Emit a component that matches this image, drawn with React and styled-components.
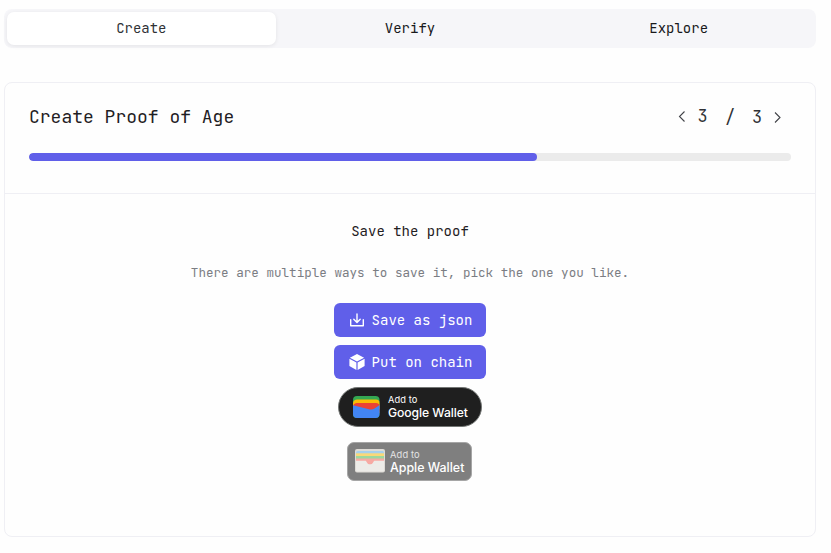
import React from "react";
import styled, { createGlobalStyle } from "styled-components";

const GlobalStyle = createGlobalStyle`
  *, *::before, *::after { box-sizing: border-box; }
  body {
    margin: 0;
    background: #fefefe;
    color: #1f2023;
    font-family: "JetBrains Mono", "DejaVu Sans Mono", monospace;
    overflow: hidden;
  }
  button { font: inherit; color: inherit; border: 0; background: none; padding: 0; cursor: pointer; }
  svg { display: block; flex: none; }
`;

const Page = styled.main`
  width: 812px;
  height: 537px;
  margin-left: 4px;
  padding-top: 9px;
  display: flex;
  flex-direction: column;
  gap: 34px;
`;

const Tabs = styled.nav`
  display: grid;
  grid-template-columns: repeat(3, 1fr);
  height: 39px;
  padding: 3px;
  flex: none;
  border-radius: 8px;
  background: #f6f6f9;
`;

const Tab = styled.button`
  border-radius: 7px;
  font-size: 14px;
  line-height: 33px;
  background: ${({ $active }) => ($active ? "#fff" : "transparent")};
  color: ${({ $active }) => ($active ? "#303236" : "#18191b")};
  box-shadow: ${({ $active }) => ($active ? "0 1px 4px rgba(0, 0, 0, 0.08)" : "none")};
`;

const Card = styled.section`
  height: 455px;
  display: flex;
  flex-direction: column;
  border: 1px solid #efeff4;
  border-radius: 8px;
  background: #fefefe;
`;

const CardHeader = styled.header`
  height: 111px;
  flex: none;
  padding: 20px 24px 0;
  border-bottom: 1px solid #efeff4;
`;

const TitleRow = styled.div`
  display: flex;
  align-items: center;
  justify-content: space-between;
  height: 28px;
`;

const Title = styled.h1`
  margin: 0;
  font-size: 18px;
  font-weight: 400;
  line-height: 28px;
`;

const Pager = styled.div`
  display: grid;
  grid-template-columns: 18px 24px 31px 23px 18px;
  align-items: center;
  justify-items: center;
  margin-right: 4.5px;
  font-size: 17px;
  line-height: 28px;
  color: #303236;
`;

const CurrentStep = styled.span`
  padding-bottom: 2px;
`;

const Track = styled.div`
  height: 8px;
  margin-top: 22px;
  overflow: hidden;
  border-radius: 4px;
  background: #ebebeb;
`;

const Bar = styled.div`
  height: 100%;
  border-radius: 4px;
  background: #605fe9;
`;

const CardBody = styled.div`
  display: flex;
  flex-direction: column;
  align-items: center;
  padding-top: 27px;
`;

const Heading = styled.h2`
  margin: 0 0 21px;
  font-size: 14px;
  font-weight: 400;
  line-height: 21px;
`;

const Hint = styled.p`
  margin: 0 0 20px;
  font-size: 12.6px;
  line-height: 20px;
  color: #7b7d83;
`;

const Action = styled.button`
  display: flex;
  align-items: center;
  gap: 6.6px;
  width: 152px;
  height: 34px;
  margin-bottom: 8px;
  padding-left: 15px;
  border-radius: 6px;
  background: #605fe9;
  color: #fff;
  font-size: 14px;
  line-height: 34px;
  white-space: nowrap;
`;

const WalletButton = styled.button`
  display: flex;
  align-items: center;
  text-align: left;
  color: #fff;
  white-space: nowrap;
`;

const GoogleWallet = styled(WalletButton)`
  width: 144px;
  height: 40px;
  gap: 8px;
  padding-left: 14px;
  border: 1px solid #747775;
  border-radius: 20px;
  background: #1f1f1f;
`;

const AppleWallet = styled(WalletButton)`
  width: 125px;
  height: 38.5px;
  gap: 5px;
  margin: 15px 1px 0 0;
  padding-left: 7px;
  border: 1px solid #a6a6a6;
  border-radius: 7px;
  background: #7f7f7f;
`;

const WalletText = styled.span`
  display: flex;
  flex-direction: column;
  font-family: Inter, sans-serif;
`;

const Small = styled.span`
  font-size: 9.3px;
  line-height: 12px;
  letter-spacing: ${({ $spacing }) => $spacing};
  color: ${({ $color }) => $color};
`;

const Brand = styled.span`
  font-size: ${({ $size }) => $size};
  font-weight: ${({ $weight }) => $weight};
  line-height: ${({ $line }) => $line};
  letter-spacing: ${({ $spacing }) => $spacing};
`;

const Chevron = ({ next }) => (
  <svg width="8" height="12" viewBox="0 0 8 12" fill="none" stroke="#414348" strokeWidth="1.1">
    <path d={next ? "M1 1.500 6 6.500 1 11.500" : "M6.500 .5 1.500 5.500 6.500 10.500"} />
  </svg>
);

const DownloadIcon = () => (
  <svg width="16" height="16" viewBox="0 0 16 16" fill="none" stroke="#fff" strokeWidth="1.4">
    <path d="M8 2v8.2M4.8 7.3 8 10.5l3.2-3.2M1.7 7.7v6.1h12.6V7.7" strokeLinejoin="round" strokeLinecap="round" />
  </svg>
);

const CubeIcon = () => (
  <svg width="16" height="16" viewBox="0 0 16 16" fill="#fff">
    <path d="M8 0 15.1 3.8 8 7.5.9 3.8Z M.4 4.8 7.4 8.5v7.4L.4 12Z M15.6 4.8 8.6 8.5v7.4l7-3.900Z" />
  </svg>
);

const GoogleIcon = () => (
  <svg width="27" height="23" viewBox="0 0 27 23">
    <defs>
      <clipPath id="google-wallet">
        <rect x="0" y="0" width="26.500" height="22" rx="4" />
      </clipPath>
    </defs>
    <g clipPath="url(#google-wallet)">
      <path fill="#34a853" d="M0 0h27v23H0z" />
      <path fill="#fbbc04" d="M0 7.500c0-3 2-4 4-4h19c2 0 4 1 4 4v6H0z" />
      <path fill="#ea4335" d="M0 11c0-3 2-4 4-4h19c2 0 4 1 4 4v6H0z" />
      <path fill="#4285f4" d="M0 9.200 16 13.200c2 .5 4 .2 5.500-.8L27 8.700V23H0z" />
    </g>
  </svg>
);

const AppleIcon = () => (
  <svg width="30" height="24" viewBox="0 0 30 24">
    <rect width="30" height="23.500" rx="2" fill="#dedbd6" />
    <path fill="#a6d0ec" d="M1 3.500q0-1.500 1.500-1.500h25q1.500 0 1.500 1.500v2H1z" />
    <path fill="#fbd878" d="M1 4.300h28v4H1z" />
    <path fill="#9ed89e" d="M1 7h28v4H1z" />
    <path fill="#f7aaa3" d="M1 9.500h28v6H1z" />
    <path fill="#edece8" d="M1 11.800h9c1 0 1.200.5 1.600 1.200.9 1.700 1.800 2.500 3.400 2.500s2.500-.8 3.400-2.500c.4-.7.6-1.200 1.600-1.200h9V21q0 1.500-1.500 1.500h-25Q1 22.500 1 21z" />
  </svg>
);

const STEP_PROGRESS = 200 / 3;

export default function App() {
  return (
    <>
      <GlobalStyle />
      <Page>
        <Tabs>
          <Tab $active>Create</Tab>
          <Tab>Verify</Tab>
          <Tab>Explore</Tab>
        </Tabs>
        <Card>
          <CardHeader>
            <TitleRow>
              <Title>Create Proof of Age</Title>
              <Pager>
                <button aria-label="Previous step"><Chevron /></button>
                <CurrentStep>3</CurrentStep>
                <span>/</span>
                <span>3</span>
                <button aria-label="Next step"><Chevron next /></button>
              </Pager>
            </TitleRow>
            <Track>
              <Bar style={{ width: `${STEP_PROGRESS}%` }} />
            </Track>
          </CardHeader>
          <CardBody>
            <Heading>Save the proof</Heading>
            <Hint>There are multiple ways to save it, pick the one you like.</Hint>
            <Action><DownloadIcon />Save as json</Action>
            <Action><CubeIcon />Put on chain</Action>
            <GoogleWallet>
              <GoogleIcon />
              <WalletText>
                <Small $color="#fff" $spacing="0.1px">Add to</Small>
                <Brand $size="12.2px" $weight={500} $line="14px" $spacing="-0.07px">Google Wallet</Brand>
              </WalletText>
            </GoogleWallet>
            <AppleWallet>
              <AppleIcon />
              <WalletText>
                <Small $color="#e4e4e4" $spacing="0.15px">Add to</Small>
                <Brand $size="12.4px" $weight={450} $line="13px" $spacing="0">Apple Wallet</Brand>
              </WalletText>
            </AppleWallet>
          </CardBody>
        </Card>
      </Page>
    </>
  );
}
